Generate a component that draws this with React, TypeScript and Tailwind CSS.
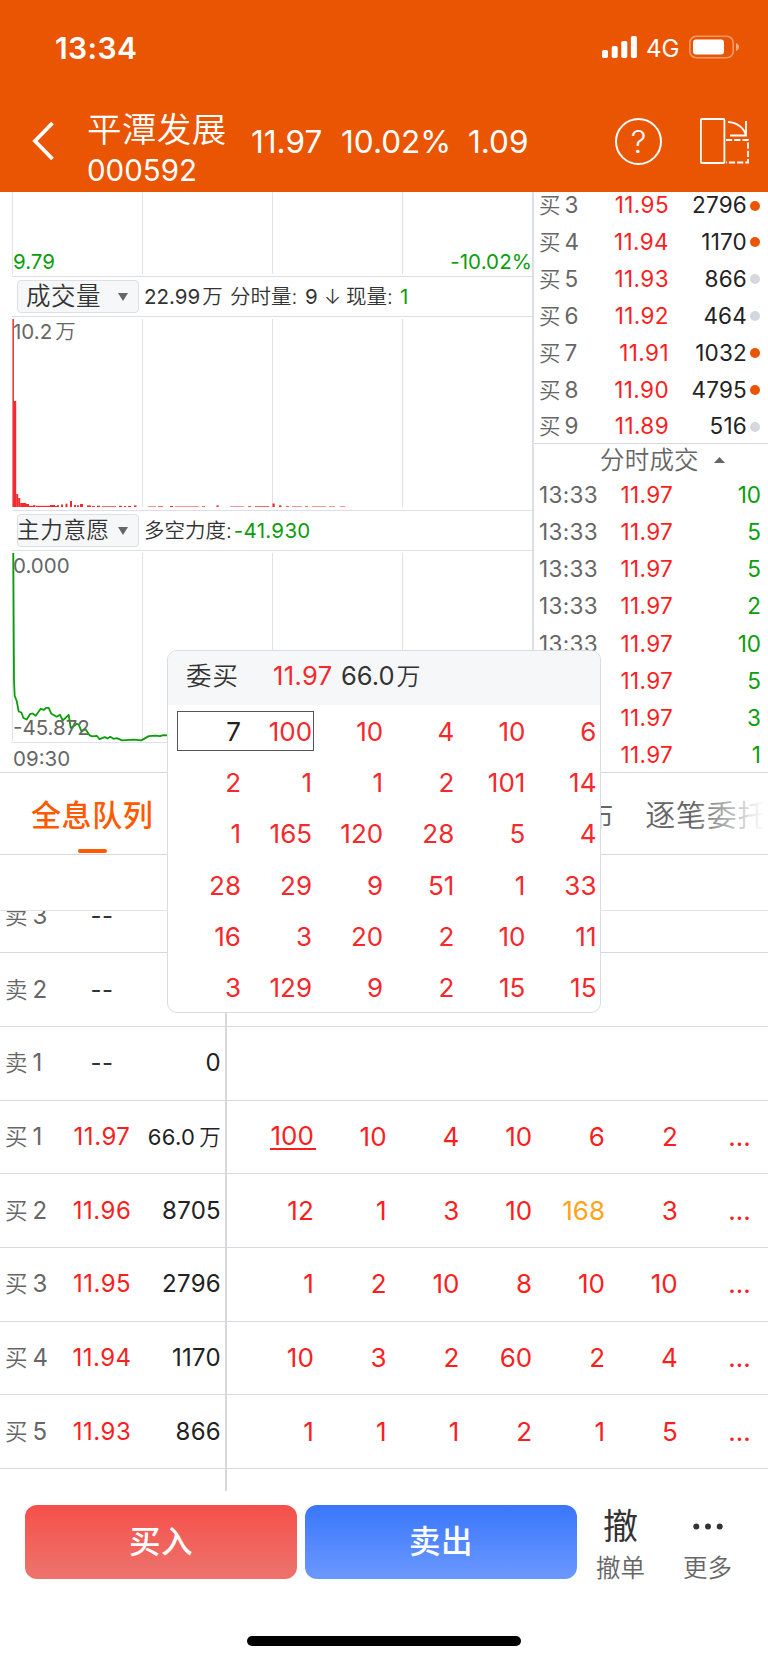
import clsx from "clsx";

const bids = [
  { level: 3, price: "11.95", qty: "2796", hot: true },
  { level: 4, price: "11.94", qty: "1170", hot: true },
  { level: 5, price: "11.93", qty: "866", hot: false },
  { level: 6, price: "11.92", qty: "464", hot: false },
  { level: 7, price: "11.91", qty: "1032", hot: true },
  { level: 8, price: "11.90", qty: "4795", hot: true },
  { level: 9, price: "11.89", qty: "516", hot: false },
];

const ticks = ["10", "5", "5", "2", "10", "5", "3", "1"];

const queue = [
  ["7", "100", "10", "4", "10", "6"],
  ["2", "1", "1", "2", "101", "14"],
  ["1", "165", "120", "28", "5", "4"],
  ["28", "29", "9", "51", "1", "33"],
  ["16", "3", "20", "2", "10", "11"],
  ["3", "129", "9", "2", "15", "15"],
];

const orders = [
  { side: "卖", level: 3, price: "--", qty: "", cells: [] },
  { side: "卖", level: 2, price: "--", qty: "", cells: [] },
  { side: "卖", level: 1, price: "--", qty: "0", cells: [] },
  { side: "买", level: 1, price: "11.97", qty: "66.0万", cells: ["100", "10", "4", "10", "6", "2"] },
  { side: "买", level: 2, price: "11.96", qty: "8705", cells: ["12", "1", "3", "10", "168", "3"] },
  { side: "买", level: 3, price: "11.95", qty: "2796", cells: ["1", "2", "10", "8", "10", "10"] },
  { side: "买", level: 4, price: "11.94", qty: "1170", cells: ["10", "3", "2", "60", "2", "4"] },
  { side: "买", level: 5, price: "11.93", qty: "866", cells: ["1", "1", "1", "2", "1", "5"] },
];

// [x, width, height] of each minute's volume bar
const volumes = [
  [0.5, 1.4, 188], [1.4, 2.8, 106], [4.2, 2, 13], [6.2, 2, 9], [8.2, 6, 4], [14, 3, 3], [17, 6, 1.2],
  [21, 2.5, 1.8], [24, 14, 1.2], [38, 5, 2], [43, 2, 1], [45, 2, 1.8], [49, 2, 2.5], [53.5, 2, 3.3],
  [58, 2, 6], [62, 2, 2], [65, 2, 1.7], [68, 3, 3], [75, 4, 1.6], [80, 3, 1], [85, 3, 1.3], [90, 14, 0.7],
  [107, 3, 1.2], [112, 2, 1], [116, 3, 1], [122, 2.5, 1.6], [136, 8, 0.5], [146, 5, 0.7], [158, 3, 1],
  [163, 24, 0.5], [190, 3, 0.7], [204.5, 2.2, 1.6], [218, 14, 0.5], [236, 3, 0.8], [243, 14, 0.7],
  [260.5, 2.2, 3.5], [267, 2.5, 1.6], [274, 3, 0.8], [280, 10, 0.5], [293, 3, 0.7], [300, 14, 0.5], [317, 6, 0.5], [328, 5, 0.5],
];

function StatusBar() {
  return (
    <div className="flex h-[94px] items-center justify-between pl-[55px] pr-[29px]">
      <span className="mt-[2px] text-[30px] leading-none font-semibold tracking-[0.4px]">13:34</span>
      <div className="flex items-center">
        <svg className="h-[22px] w-[36px]" viewBox="0 0 36 22" fill="currentColor">
          <rect x="0" y="14" width="6" height="8" rx="1.7" />
          <rect x="9.7" y="10" width="6" height="12" rx="1.7" />
          <rect x="19.3" y="5" width="6" height="17" rx="1.7" />
          <rect x="28.9" y="0" width="6" height="22" rx="1.7" />
        </svg>
        <span className="ml-[8px] mt-[3px] w-[43px] text-[24px] leading-none font-normal">4G</span>
        <svg className="h-[24px] w-[50px]" viewBox="0 0 50 24">
          <rect x="0.8" y="1.2" width="43.4" height="21.6" rx="6.5" fill="none" stroke="white" strokeOpacity="0.4" strokeWidth="1.6" />
          <rect x="4" y="4.5" width="31" height="15" rx="3" fill="white" />
          <path d="M47 8v8c2-1 3-2.400 3-4s-1-3-3-4z" fill="white" fillOpacity="0.5" />
        </svg>
      </div>
    </div>
  );
}

function TitleBar() {
  return (
    <div className="flex h-[98px] items-center">
      <svg className="ml-[32px] mt-[-4px] h-[40px] w-[24px]" viewBox="0 0 24 40" fill="none" stroke="currentColor" strokeWidth="3.800">
        <path d="M20.500 2 3 20l17.500 18" />
      </svg>
      <div className="mt-[13px] ml-[31px] w-[164px]">
        <div className="text-[34.5px] leading-[36px] font-[350] tracking-[0.4px]">平潭发展</div>
        <div className="mt-[4px] text-[29.5px] leading-[36px]">000592</div>
      </div>
      <div className="mt-[-2px] flex gap-[19px] text-[31.5px] leading-none">
        <span className="w-[71px]">11.97</span>
        <span className="w-[108px]">10.02%</span>
        <span>1.09</span>
      </div>
      <div className="mt-[-4px] ml-auto mr-[38px] flex size-[47px] items-center justify-center rounded-full border-2 border-white text-[31px] leading-none font-light">
        ?
      </div>
      <svg className="mt-[-4px] mr-[18px] h-[48px] w-[50px]" viewBox="0 0 50 48" fill="none" stroke="currentColor" strokeWidth="1.800">
        <rect x="0.900" y="2" width="23.500" height="44" rx="1" />
        <path d="M28 5c9 0.500 16 5.500 18 13.500M46 4v15M30 18.500h16.800" />
        <path d="M26 23h22v22.500h-22" strokeDasharray="6.200 2" />
      </svg>
    </div>
  );
}

function Grid() {
  return (
    <div className="absolute inset-y-0 left-[12px] flex w-[521px] border-l border-[#dfe2ea]">
      <div className="w-[130px] border-r border-[#dfe2ea]" />
      <div className="w-[130px] border-r border-[#dfe2ea]" />
      <div className="w-[130px] border-r border-[#dfe2ea]" />
    </div>
  );
}

function Picker({ label, tight }: { label: string; tight?: boolean }) {
  return (
    <div className="flex h-[33px] w-[122px] items-center justify-between rounded-[4px] border border-[#dcdfe5] bg-[#f6f7f9] pr-[10px]">
      <span className={clsx("leading-none whitespace-nowrap font-[350]", tight ? "-ml-px text-[22.5px] tracking-[0.7px]" : "pl-[8px] text-[24.5px] tracking-[0.5px]")}>{label}</span>
      <svg className="h-[8px] w-[10px]" viewBox="0 0 10 8" fill="#666">
        <path d="M0 0h10L5 8z" />
      </svg>
    </div>
  );
}

function Charts() {
  return (
    <div className="w-[532px] shrink-0 text-[#333]">
      <div className="relative h-[82px] text-[20.5px] leading-none text-[#0a9e0a]">
        <Grid />
        <div className="relative flex justify-between pt-[60px] pl-[13px]">
          <span>9.79</span>
          <span className="tracking-[0.1px]">-10.02%</span>
        </div>
      </div>
      <div className="ml-[12px] mt-[2px] flex h-[41px] items-center border-y border-[#dcdfe6] pl-[5px]">
        <Picker label="成交量" />
        <div className="mt-px ml-[5px] flex items-center text-[20.5px] leading-none font-[350] whitespace-nowrap">
          <span className="w-[86px] font-normal">22.99<span className="ml-[2px] font-[350]">万</span></span>
          <span className="w-[75px]">分时量:</span>
          <span className="w-[19px] font-normal">9</span>
          <span className="w-[22px]">↓</span>
          <span className="w-[54px]">现量:</span>
          <span className="font-normal text-[#0a9e0a]">1</span>
        </div>
      </div>
      <div className="relative mt-[2px] h-[188px]">
        <Grid />
        <svg className="absolute top-0 left-[12px] h-[188px] w-[400px]" viewBox="0 0 400 188" fill="#f5282c">
          {volumes.map(([x, w, h]) => (
            <rect key={x} x={x} y={188 - h} width={w} height={h} />
          ))}
        </svg>
        <span className="relative block pt-[3px] pl-[13px] text-[20.5px] leading-none text-[#666]">
          10.2<span className="ml-[3px] font-[350]">万</span>
        </span>
      </div>
      <div className="ml-[12px] mt-[3px] flex h-[41px] items-center border-y border-[#dcdfe6] pl-[5px]">
        <Picker label="主力意愿" tight />
        <div className="mt-px ml-[5px] text-[20.5px] leading-none font-[350] whitespace-nowrap">
          多空力度:<span className="ml-[2px] font-normal tracking-[0.3px] text-[#0a9e0a]">-41.930</span>
        </div>
      </div>
      <div className="relative mt-[2px] h-[188px] text-[20.5px] leading-none text-[#666]">
        <Grid />
        <svg className="absolute top-0 left-0 h-[190px] w-[200px]" viewBox="0 0 200 190" fill="none" stroke="#0a9e0a" strokeWidth="1.800" strokeLinejoin="round">
          <path d="M13.300 0 14 127l.7 16 2 5 2 10.500 2.700 1 2 5.500 3.300 1.500 3.300-5.300 2.700-.7 3 2.300 5-7 3.300 1 2-2 2.700 0 2.700 6 5.300 3 3.300-2 2.700 5.700 6-5.700 2 13 2.700-1.300 3.300-2.700 2 .7 2.700 6.600 4-2 4 6 2.700 1.300 4.700-.6 2.700 3.300 5.300-2 2.700 1.300 2.700-1.600 3.300 2 3.300-.7 5.300 2.300 11.300-.7 8 .7 7.400-4.300 6.600-.4 4.700.4 3.300-1 8 .6" />
        </svg>
        <div className="relative flex h-full flex-col justify-between pt-[3px] pb-[3px] pl-[13px]">
          <span>0.000</span>
          <span>-45.872</span>
        </div>
      </div>
      <div className="ml-[12px] mt-px border-t border-[#dfe2ea] pt-[6px] pl-px text-[20.5px] leading-none text-[#666]">09:30</div>
    </div>
  );
}

function Book() {
  return (
    <div className="flex h-[580px] flex-1 flex-col overflow-hidden border-l-2 border-[#dcdfe5] text-[22.5px] leading-none">
      <div className="flex h-[251.500px] shrink-0 flex-col justify-end border-b border-[#d6d9e0]">
        {bids.map((b) => (
          <div key={b.level} className="flex h-[36.830px] shrink-0 items-center pt-[5px] pr-[8px] pl-[5px]">
            <span className="w-[51px] text-[#666]"><span className="mr-[4px] text-[21.5px] font-[350]">买</span>{b.level}</span>
            <span className="w-[79px] text-right tracking-[0.4px] text-[#fa1e1e]">{b.price}</span>
            <span className="flex-1 text-right tracking-[0.2px] text-[#222]">{b.qty}</span>
            <i className={clsx("ml-[3px] size-[10px] rounded-full", b.hot ? "bg-[#ea5504]" : "bg-[#d4d7de]")} />
          </div>
        ))}
      </div>
      <div className="flex h-[33px] shrink-0 items-center pl-[66px] text-[#666]">
        <span className="text-[24.5px] leading-none font-[350] tracking-[0.2px]">分时成交</span>
        <svg className="ml-[15px] h-[6px] w-[11px]" viewBox="0 0 11 6" fill="currentColor"><path d="M5.500 0 11 6H0z" /></svg>
      </div>
      {ticks.map((qty, i) => (
        <div key={i} className="flex h-[37.200px] shrink-0 items-center pr-[7px] pl-[5px]">
          <span className="w-[70px] tracking-[0.3px] text-[#666]">13:33</span>
          <span className="w-[64px] text-right tracking-[0.3px] text-[#fa1e1e]">11.97</span>
          <span className="flex-1 text-right text-[#0a9e0a]">{qty}</span>
        </div>
      ))}
    </div>
  );
}

function QueuePopup() {
  return (
    <div className="absolute top-[650px] left-[167px] h-[363px] w-[434px] overflow-hidden rounded-[10px] border border-[#d9dce2] bg-white">
      <div className="flex h-[54px] items-center bg-[#f6f7f9] pb-[4px] pl-[18px] text-[25.5px] leading-none text-[#333]">
        <span className="w-[87px] font-[350] tracking-[1px]">委买</span>
        <span className="w-[68px] tracking-[0.4px] text-[#f5282c]">11.97</span>
        <span>66.0<span className="ml-[2px] text-[24px] font-[350]">万</span></span>
      </div>
      {queue.map((row, r) => (
        <div key={r} className="relative flex h-[51.200px] items-center pt-[3px] text-[26px] leading-none text-[#f5282c]">
          {r === 0 && <div className="absolute top-[6px] left-[9px] h-[40px] w-[137px] border border-[#555]" />}
          {row.map((n, c) => (
            <span key={c} className={clsx("text-right", c === 0 ? "w-[73px]" : "w-[71.100px]", r === 0 && c === 0 && "text-[#222]")}>{n}</span>
          ))}
        </div>
      ))}
    </div>
  );
}

function Orders() {
  return (
    <div className="flex h-[581px] flex-col overflow-hidden border-t border-[#dfe2ea]">
      {orders.map((o, i) => (
        <div key={i} className={clsx("flex shrink-0 items-stretch leading-none", i === 0 ? "-mt-[31.500px] h-[73.700px]" : "h-[73.700px]")}>
          <div className="flex w-[227px] items-center border-r-2 border-b-[1.500px] border-[#d6d9e0] pl-[5px] text-[24px]">
            <span className="w-[56px] text-[#666]"><span className="mr-[5px] text-[22.5px] font-[350]">{o.side}</span>{o.level}</span>
            <span className={clsx("w-[82px] text-center tracking-[0.5px]", o.price === "--" ? "text-[#333]" : "text-[#fa1e1e]")}>{o.price}</span>
            <span className="flex-1 pr-[4px] text-right tracking-[0.3px] text-[#222]">
              {o.qty.endsWith("万") ? <span className="text-[22px]">{o.qty.slice(0, -1)}<span className="ml-[4px] text-[21.5px] font-[350]">万</span></span> : o.qty}
            </span>
          </div>
          <div className="flex flex-1 items-center border-b-[1.500px] border-[#d6d9e0] pl-[14px] text-[26px] text-[#fa1e1e]">
            {o.cells.map((n, c) => (
              <span key={c} className={clsx("w-[72.800px] text-right", n === "168" && "text-[#ffa319]")}>
                {i === 3 && c === 0 ? <span className="-mr-[2px] inline-block h-[27px] border-b-2 border-[#fa1e1e] pr-[2px] leading-[26px]">{n}</span> : n}
              </span>
            ))}
            {o.cells.length > 0 && <span className="w-[73px] text-right">...</span>}
          </div>
        </div>
      ))}
      <div className="w-[227px] flex-1 border-r-2 border-[#d6d9e0]" />
    </div>
  );
}

export default function App() {
  return (
    <div className="relative h-[1663px] w-[768px] overflow-hidden bg-white font-['Inter','Noto_Sans_CJK_SC',sans-serif]">
      <header className="h-[192px] bg-[#ea5504] text-white">
        <StatusBar />
        <TitleBar />
      </header>
      <div className="flex h-[581px] overflow-hidden border-b border-[#d6d9e0]">
        <Charts />
        <Book />
      </div>
      <nav className="relative flex h-[82px] justify-between overflow-hidden border-b border-[#d6d9e0] pl-[31px] text-[30px] leading-[85px] whitespace-nowrap">
        <div className="relative tracking-[0.6px] font-medium text-[#ff5a00]">
          全息队列
          <i className="absolute bottom-[1px] left-[47px] h-[4px] w-[29px] rounded-full bg-[#ff5a00]" />
        </div>
        <div className="flex w-[277px] shrink-0 gap-[31px] tracking-[0.8px] font-[350] text-[#666]">
          <span>千档分布</span>
          <span>逐笔委托</span>
        </div>
        <div className="absolute inset-y-0 right-0 w-[76px] bg-linear-to-r from-white/0 to-white to-95%" />
      </nav>
      <div className="h-[55px]" />
      <Orders />
      <footer className="flex pt-[14px] pl-[25px] leading-none">
        <div className="flex h-[74px] w-[272px] items-center justify-center rounded-[12px] bg-linear-to-b from-[#f54f49] to-[#ed726d] text-[31.5px] font-medium tracking-[0.6px] text-white">买入</div>
        <div className="ml-[8px] flex h-[74px] w-[272px] items-center justify-center rounded-[12px] bg-linear-to-b from-[#3876fa] to-[#6b98ff] text-[31.5px] font-medium tracking-[0.6px] text-white">卖出</div>
        <div className="flex w-[87px] flex-col items-center text-[#666]">
          <span className="mt-[3px] text-[35px] leading-[36px] text-[#333]">撤</span>
          <span className="mt-[12px] text-[24.5px] leading-[25px] font-[350]">撤单</span>
        </div>
        <div className="flex w-[87px] flex-col items-center text-[#666]">
          <svg className="mt-[18px] h-[7px] w-[30px]" viewBox="0 0 30 7" fill="#333">
            <circle cx="3.300" cy="3.500" r="3" /><circle cx="15" cy="3.500" r="3" /><circle cx="26.700" cy="3.500" r="3" />
          </svg>
          <span className="mt-[26px] text-[24.5px] leading-[25px] font-[350]">更多</span>
        </div>
      </footer>
      <div className="mx-auto mt-[55px] h-[10px] w-[274px] rounded-full bg-black" />
      <QueuePopup />
    </div>
  );
}
